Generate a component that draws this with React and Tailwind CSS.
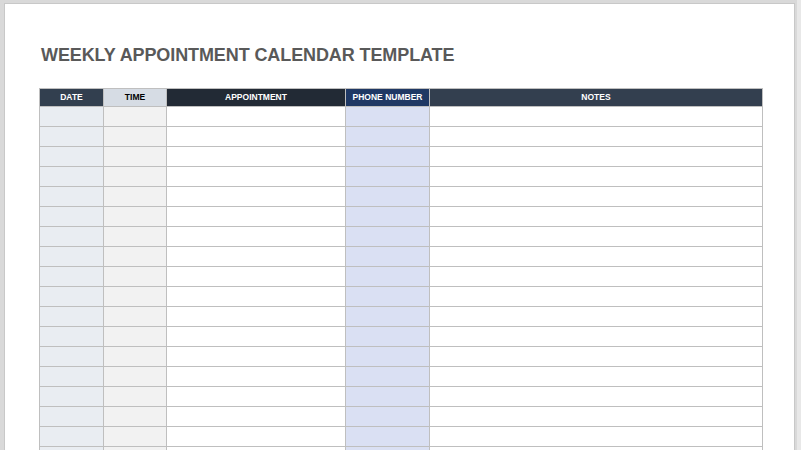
import React from "react";

const cols = [
  { label: "DATE", w: "w-[64px]", head: "bg-[#323f4f] text-white", cell: "bg-[#e9edf2]" },
  { label: "TIME", w: "w-[63px]", head: "bg-[#d6dce4] text-black", cell: "bg-[#f2f2f2]" },
  { label: "APPOINTMENT", w: "w-[179px]", head: "bg-[#222a35] text-white", cell: "bg-white" },
  { label: "PHONE NUMBER", w: "w-[84px]", head: "bg-[#1f3864] text-white", cell: "bg-[#dae0f3]" },
  { label: "NOTES", w: "w-[333px]", head: "bg-[#333f4f] text-white", cell: "bg-white" },
];

const rows = Array.from({ length: 18 });

export default function App() {
  return (
    <div className="w-[801px] h-[450px] overflow-hidden bg-[#e6e6e6] flex">
      <div className="flex-1 h-full bg-[#d9d9d9] pl-[4px] pt-[3px] flex">
        <div className="w-[791px] h-[500px] bg-white border-l border-t border-r border-[#c8c8c8] pl-[34px] pt-[39px]">
          <h1 className="text-[18px] leading-[24px] font-bold text-[#595959] tracking-[-0.1px] ml-[2px]" style={{ fontFamily: '"Liberation Sans", Arial, sans-serif' }}>
            WEEKLY APPOINTMENT CALENDAR TEMPLATE
          </h1>
          <table className="mt-[21px] border-collapse table-fixed" style={{ fontFamily: '"Liberation Sans", Arial, sans-serif' }}>
            <thead>
              <tr>
                {cols.map((c) => (
                  <th key={c.label} className={`${c.w} ${c.head} h-[18px] p-0 border border-[#bfbfbf] text-[8.5px] font-bold leading-none text-center`}>
                    {c.label}
                  </th>
                ))}
              </tr>
            </thead>
            <tbody>
              {rows.map((_, i) => (
                <tr key={i}>
                  {cols.map((c) => (
                    <td key={c.label} className={`${c.w} ${c.cell} h-[20px] p-0 border border-[#bfbfbf]`}></td>
                  ))}
                </tr>
              ))}
            </tbody>
          </table>
        </div>
      </div>
      <div className="w-[4px] h-full bg-[#e8e8e8]"></div>
    </div>
  );
}
